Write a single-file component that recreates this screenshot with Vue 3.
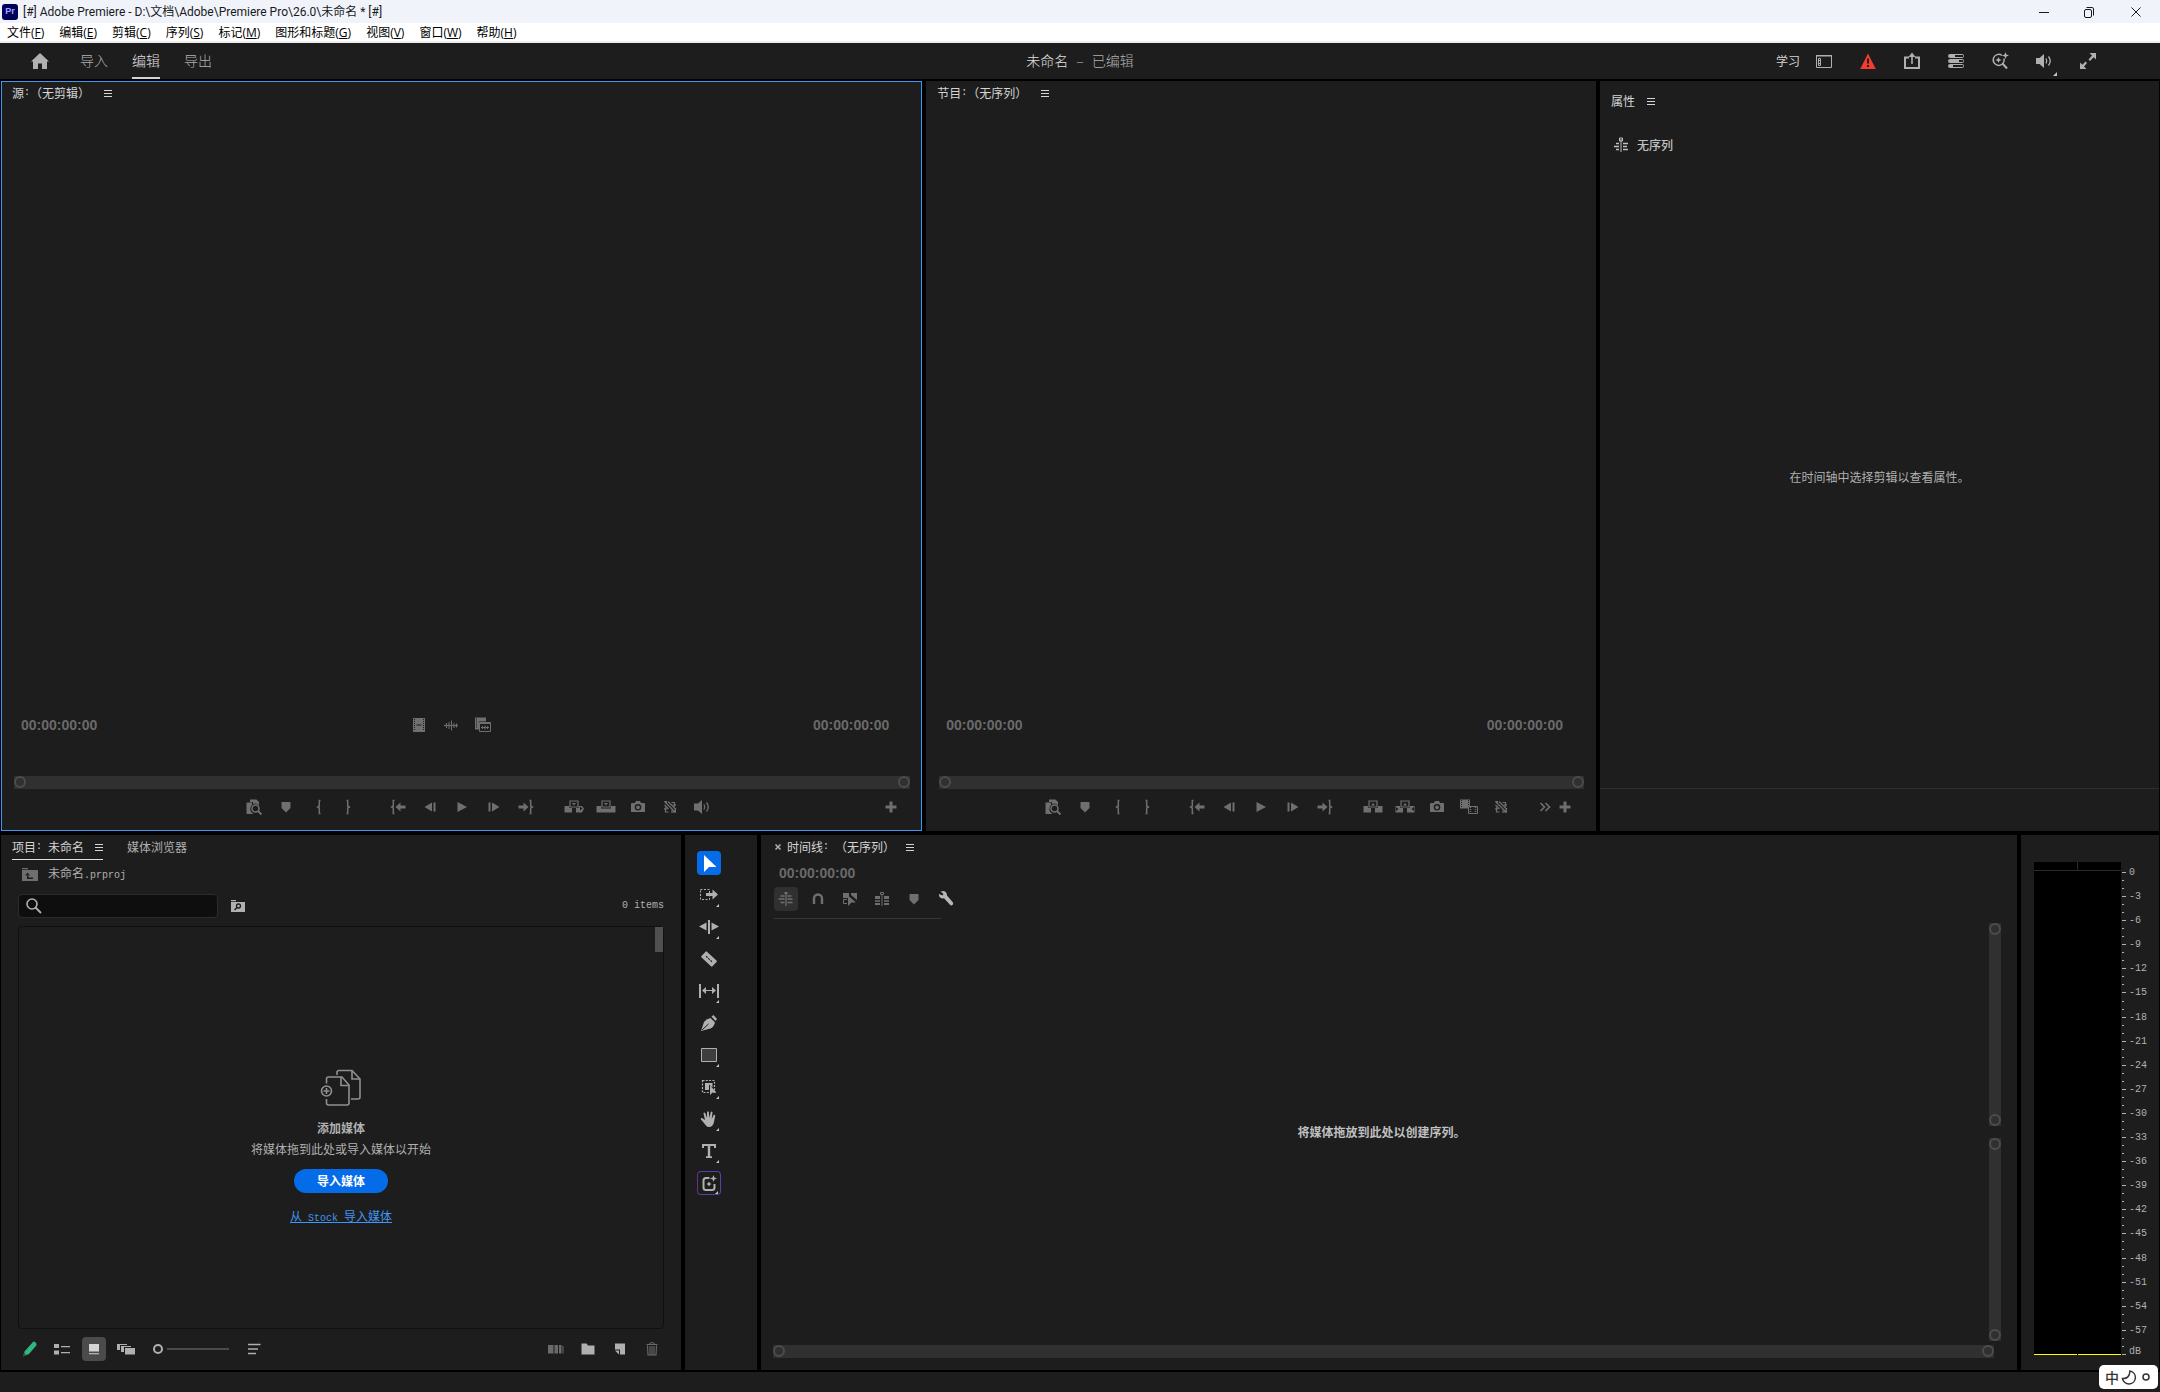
<script setup>
import { ref } from 'vue'

const menus = [
  ['文件', 'F'], ['编辑', 'E'], ['剪辑', 'C'], ['序列', 'S'], ['标记', 'M'],
  ['图形和标题', 'G'], ['视图', 'V'], ['窗口', 'W'], ['帮助', 'H'],
]

const modes = ['导入', '编辑', '导出']
const activeMode = ref('编辑')

const headerTools = [
  ['workspace', '工作区'], ['warning', '警告'], ['share', '快速导出'], ['stack', '项目设置'],
  ['sparkle-search', '搜索'], ['volume', '音频'], ['expand', '全屏'],
]

const transportLeft = [
  ['find', '匹配帧'], ['marker', '添加标记'], ['brace-open', '标记入点'], ['brace-close', '标记出点'],
  ['go-in', '转到入点'], ['step-back', '后退一帧'],
]
const sourceRight = [
  ['step-forward', '前进一帧'], ['go-out', '转到出点'], ['insert', '插入'], ['overwrite', '覆盖'],
  ['camera', '导出帧'], ['proxy', '切换代理'], ['sound', '静音'],
]
const programRight = [
  ['step-forward', '前进一帧'], ['go-out', '转到出点'], ['lift', '提升'], ['extract', '提取'],
  ['camera', '导出帧'], ['compare', '比较视图'], ['proxy', '切换代理'],
]

const tools = [
  ['arrow', '选择工具', false], ['track', '向前选择轨道工具', true], ['ripple', '波纹编辑工具', true],
  ['razor', '剃刀工具', false], ['slip', '外滑工具', true], ['pen', '钢笔工具', false],
  ['rectangle', '矩形工具', true], ['object', '对象蒙版工具', true], ['hand', '手形工具', true],
  ['type', '文字工具', true], ['generate', '生成式扩展工具', true],
]
const activeTool = ref('arrow')

const timelineTools = [
  ['nest', '嵌套序列'], ['magnet', '对齐'], ['linked', '链接选择项'],
  ['tracks', '添加编辑'], ['marker', '添加标记'], ['wrench', '时间轴显示设置'],
]

const levels = Array.from({ length: 20 }, (_, i) => (i === 0 ? '0' : `-${i * 3}`))
const zoom = ref(0)
const query = ref('')
</script>

<template>
  <svg class="sprite" aria-hidden="true">
    <symbol id="menu" viewBox="0 0 24 24"><path d="M8 9h8M8 12h8M8 15h8" stroke="currentColor" fill="none" transform="translate(0 .5)" /></symbol>
    <symbol id="home" viewBox="0 0 24 24"><path d="M12 4 3 12.500h2V20h5v-5.500h4V20h5v-7.500h2z" /></symbol>
    <symbol id="workspace" viewBox="0 0 24 24"><path d="M4.500 6.500h15v12h-15z" fill="none" stroke="currentColor" /><path d="M4 6h16v1.500H4z" /><path d="M6.500 9.500h2v7h-2z" fill="none" stroke="currentColor" /><path d="M6.500 11.500h2M6.500 14.500h2" stroke="currentColor" /></symbol>
    <symbol id="warning" viewBox="0 0 24 24"><path d="M12 4.500 19.800 20H4.200z" fill="#f23d2e" /><path d="M11 9.500h2v5h-2zM11 16h2v2h-2z" fill="#1d1d1d" /></symbol>
    <symbol id="share" viewBox="0 0 24 24"><path d="M9 8.500H5V19h14V8.500h-4" fill="none" stroke="currentColor" stroke-width="2" /><path d="M12 15V6" stroke="currentColor" stroke-width="1.600" /><path d="M12 3.500 8.500 8h7z" /></symbol>
    <symbol id="stack" viewBox="0 0 24 24"><g fill="none" stroke="currentColor"><rect x="4.500" y="5.500" width="15" height="3" rx="1" /><rect x="4.500" y="10.500" width="15" height="3" rx="1" /><rect x="4.500" y="15.500" width="15" height="3" rx="1" /></g><path d="M5 6h6v2H5zM5 11h10v2H5zM5 16h4v2H5z" /></symbol>
    <symbol id="sparkle-search" viewBox="0 0 24 24"><path d="M14 6.500A5.500 5.500 0 1 0 16 9.500" fill="none" stroke="currentColor" stroke-width="1.500" /><path d="m14.500 14.500 4.500 5" stroke="currentColor" stroke-width="2" /><path d="m17.500 3 .9 2.600L21 6.500l-2.600.9-.9 2.600-.9-2.600L14 6.500l2.600-.9zM10.500 8l.9 2.100 2.100.9-2.100.9-.9 2.100-.9-2.100L7.500 11l2.100-.9z" /></symbol>
    <symbol id="volume" viewBox="0 0 24 24"><path d="M4 9h3.500L12 5v14l-4.500-4H4z" /><path d="M14 9.500q1.500 2.500 0 5M16.500 7.500q3.500 4.500 0 9" fill="none" stroke="currentColor" stroke-width="1.300" /></symbol>
    <symbol id="expand" viewBox="0 0 24 24"><path d="M13.500 4H20v6.500L17.700 8.200 14 12l-1.500-1.500L16 6.500zM10.500 20H4v-6.500l2.300 2.300L9.500 12.500 11 14l-3 3.500z" /></symbol>
    <symbol id="sequence" viewBox="0 0 24 24"><path d="M12 6v13" stroke="currentColor" /><path d="M10.500 5h3v3h-3z" fill="none" stroke="currentColor" /><path d="M7 10.500h3M5 13.500h5M7 16.500h3M14 10.500h5M14 13.500h4M14 16.500h5" stroke="currentColor" stroke-width="1.700" /></symbol>

    <symbol id="film" viewBox="0 0 24 24"><path d="M6 5h12v14H6z" /><path d="M7.500 6v12M16.500 6v12" stroke="#1d1d1d" stroke-dasharray="1 1" /><path d="M9.500 12h5" stroke="#1d1d1d" /></symbol>
    <symbol id="wave" viewBox="0 0 24 24"><path d="M5 12.500h14" stroke="currentColor" stroke-width="1.200" /><path d="M7.500 10v5M10 9v7M12.500 7.500v10M15 10v5M17.500 10.500v4" stroke="currentColor" /></symbol>
    <symbol id="film-wave" viewBox="0 0 24 24"><path d="M4 4.500h11v4H8v8H4z" /><path d="M5.500 5.500v10" stroke="#1d1d1d" stroke-dasharray="1 1" /><path d="M8.500 9.500h11v9h-11z" fill="none" stroke="currentColor" /><path d="M9 9h10v2H9z" /><path d="M10 14.500h8M11.500 13v3M14 12.500v4M16.500 13v3" stroke="currentColor" /></symbol>

    <symbol id="find" viewBox="0 0 24 24"><path d="M8 4.500h6.500L17 7v3.500a5 5 0 0 0-6-1.500V7H8zM4.500 7.500H10V10a5.500 5.500 0 0 0 1.500 9h-7z" /><circle cx="13.500" cy="13.500" r="3.500" fill="none" stroke="currentColor" stroke-width="1.600" /><path d="m16 16 3.500 3.500" stroke="currentColor" stroke-width="2" /></symbol>
    <symbol id="marker" viewBox="0 0 24 24"><path d="M8 7h8q.5 0 .5.500V13L12 17.500 7.500 13V7.500Q7.500 7 8 7z" /></symbol>
    <symbol id="brace-open" viewBox="0 0 24 24"><path d="M14.500 5.500h-1.200V11L11.700 12l1.600 1v5.500h1.200" fill="none" stroke="currentColor" stroke-width="1.500" /></symbol>
    <symbol id="brace-close" viewBox="0 0 24 24"><path d="M10.500 5.500h1.200V11l1.600 1-1.600 1v5.500h-1.200" fill="none" stroke="currentColor" stroke-width="1.500" /></symbol>
    <symbol id="go-in" viewBox="0 0 24 24"><path d="M8.500 5.500H7.300V11l-1.600 1 1.600 1v5.500h1.200" fill="none" stroke="currentColor" stroke-width="1.500" /><path d="m9.500 12 5-4.500v3h5v3h-5v3z" /></symbol>
    <symbol id="go-out" viewBox="0 0 24 24"><path d="M15.500 5.500h1.200V11l1.600 1-1.600 1v5.500h-1.200" fill="none" stroke="currentColor" stroke-width="1.500" /><path d="m14.500 12-5-4.500v3h-5v3h5v3z" /></symbol>
    <symbol id="step-back" viewBox="0 0 24 24"><path d="M6.500 12 14 7.500v9zM15.500 7.500h2v9h-2z" /></symbol>
    <symbol id="step-forward" viewBox="0 0 24 24"><path d="M17.500 12 10 7.500v9zM6.500 7.500h2v9h-2z" /></symbol>
    <symbol id="play" viewBox="0 0 24 24"><path d="M7.500 7v10l9.500-5z" /></symbol>
    <symbol id="insert" viewBox="0 0 24 24"><path d="M2.500 11H7v2h3v4.500H2.500zM17 11h3l2 2.500-2 4h-6V13h3z" /><path d="M8 6h8v6H8z" fill="none" stroke="currentColor" stroke-width="1.200" /><path d="M10 8h4l-2 2.500z" /><path d="m18 11.500 2.500 2-2.500 2z" fill="#1d1d1d" /></symbol>
    <symbol id="overwrite" viewBox="0 0 24 24"><path d="M2.500 11H7v2.500h10V11h4.500v6.500h-19z" /><path d="M8 6h8v6H8z" fill="none" stroke="currentColor" stroke-width="1.200" /><path d="M10 8h4l-2 2.500z" /></symbol>
    <symbol id="lift" viewBox="0 0 24 24"><path d="M2.500 11H7v2h3v4.500H2.500zM17 11h4.500v6.500H14V13h3z" /><path d="M8 6h8v6H8z" fill="none" stroke="currentColor" stroke-width="1.200" /><path d="M10 10.500h4L12 8z" /></symbol>
    <symbol id="extract" viewBox="0 0 24 24"><path d="M2.500 11H7v2h3v4.500H2.500zM17 11h4.500v6.500H14V13h3z" /><path d="M8 6h8v6H8z" fill="none" stroke="currentColor" stroke-width="1.200" /><path d="M10 10.500h4L12 8z" /><path d="m3 12 2.500 2L3 16zM21 12l-2.500 2 2.500 2z" fill="#1d1d1d" /></symbol>
    <symbol id="camera" viewBox="0 0 24 24"><path d="M6 8h3l1-2h4l1 2h3q1 0 1 1v8H5V9q0-1 1-1z" /><circle cx="12" cy="12.300" r="2.600" fill="none" stroke="#1d1d1d" stroke-width="1.400" /></symbol>
    <symbol id="proxy" viewBox="0 0 24 24"><g fill="none" stroke="currentColor" stroke-width="1.200"><path d="m6.500 6.500 11 11M6.500 10l4 4M10 6.500l8 8" /><path d="M13.500 7.500h3v3M7.500 14v3h3M14 15v3M16 13.500h2" /></g><path d="m14.500 9.500 4 0-2 2.500zM5.500 14.500h4l-2-2.500z" /><path d="M6 6h3v3z" /><path d="M14 17.500h4v-4z" /></symbol>
    <symbol id="sound" viewBox="0 0 24 24"><path d="M4 8.500h4L12 5v14l-4-3.500H4z" /><path d="M14 9.500q1.500 2.500 0 5M16.500 7.500q3.500 4.500 0 9" fill="none" stroke="currentColor" stroke-width="1.300" /></symbol>
    <symbol id="compare" viewBox="0 0 24 24"><path d="M3 4.500h10v9H3z" /><path d="M4.500 5v8M11.500 5v8" stroke="#1d1d1d" stroke-dasharray="1 1" /><path d="M11.500 11.500h9v7h-9z" fill="#1d1d1d" stroke="currentColor" /><path d="M13.500 12v6M18.500 12v6" stroke="currentColor" stroke-width="1.500" stroke-dasharray="1 1" /></symbol>
    <symbol id="plus" viewBox="0 0 24 24"><path d="M10.500 6.500h3v4h4v3h-4v4h-3v-4h-4v-3h4z" /></symbol>
    <symbol id="chevrons" viewBox="0 0 24 24"><path d="m7.500 8 4 4-4 4M12.500 8l4 4-4 4" fill="none" stroke="currentColor" stroke-width="1.700" /></symbol>

    <symbol id="folder-up" viewBox="0 0 24 24"><path d="M4 6h6v1.200H4zM4 8h16v11H4z" /><path d="M9.500 10.500 7 13.500h5zM9 13h1.500v2.500H15V17H9z" fill="#1d1d1d" /></symbol>
    <symbol id="search" viewBox="0 0 24 24"><circle cx="10" cy="10" r="5" fill="none" stroke="currentColor" stroke-width="1.600" /><path d="m13.500 13.500 5.500 5.500" stroke="currentColor" stroke-width="1.800" /></symbol>
    <symbol id="folder-search" viewBox="0 0 24 24"><path d="M5 6h5v1.200H5zM5 8h14v10H5z" /><circle cx="12.500" cy="12" r="2" fill="none" stroke="#1d1d1d" stroke-width="1.300" /><path d="M11 13.500 8.500 16" stroke="#1d1d1d" stroke-width="1.500" /></symbol>
    <symbol id="media" viewBox="0 0 48 40"><g fill="none" stroke="currentColor" stroke-width="1.600"><path d="M9.500 14.500V10q0-2 2-2H25l7 8v18q0 2-2 2H11.500q-2 0-2-2v-4" /><path d="M24 8v8.500h8" /><path d="M20 6V3.500q0-2 2-2h13l8 8.500v18q0 2-2 2h-7" /><path d="M35 2v8h8" /><circle cx="9.500" cy="22" r="5" /><path d="M9.500 19v6M6.500 22h6" /></g></symbol>
    <symbol id="pencil" viewBox="0 0 24 24"><path d="M14.500 5.500q1-1.500 2.500-.5l1 1q1 1 .3 2.500L11 17l-6 2.500 1.500-5z" fill="#33b57e" /><path d="m6 15.500 2.500 2.500L5 19.500z" fill="#1d1d1d" opacity=".5" /></symbol>
    <symbol id="list" viewBox="0 0 24 24"><path d="M4 7h5v4H4zM4 13.500h5v4H4zM11 9h9v1.200h-9zM11 15h9v1.200h-9z" /></symbol>
    <symbol id="icons" viewBox="0 0 24 24"><path d="M7 7h10v7.500H7zM7 16.200h10v1H7z" /></symbol>
    <symbol id="freeform" viewBox="0 0 24 24"><path d="M3 7h10v1H6v5H3zM7 9h10v1h-7v5H7zM11 11h10v6.500H11z" /></symbol>
    <symbol id="sort" viewBox="0 0 24 24"><path d="M6 7.500h12.500M6 12h10M6 16.500h8" stroke="currentColor" stroke-width="1.700" /></symbol>
    <symbol id="automate" viewBox="0 0 24 24"><path d="M4 8h5.500v8.500H4zM10.500 8H14v8.500h-3.500zM15 8h2.500v8.500H15zM18.500 9h1v7.500h-1z" /></symbol>
    <symbol id="folder" viewBox="0 0 24 24"><path d="M5.500 6.500h5l1.500 2h6.500v9h-13z" /></symbol>
    <symbol id="new-item" viewBox="0 0 24 24"><path d="M7 6.500h10v11h-5v-5H7z" /><path d="M7 13.500h4v4z" /></symbol>
    <symbol id="trash" viewBox="0 0 24 24"><path d="M6.500 7.500h11M9.500 7q2.500-3 5 0M7.500 8.500l.5 9.500h8l.5-9.500M10 9v8.500M12 9v8.500M14 9v8.500" fill="none" stroke="currentColor" stroke-width="1.100" /></symbol>

    <symbol id="arrow" viewBox="0 0 24 24"><path d="M7 4v17l5-5h7.500z" /></symbol>
    <symbol id="track" viewBox="0 0 24 24"><path d="M3.500 6.500h9v10h-9z" fill="none" stroke="currentColor" stroke-dasharray="2 1.500" /><path d="M9 10h6.500V6.500l5.500 5-5.500 5V13H9z" /></symbol>
    <symbol id="ripple" viewBox="0 0 24 24"><path d="M11 5h2v14h-2zM9.500 7.500v8L2 11.500zM14.500 7.500v8l7.500-4z" /></symbol>
    <symbol id="razor" viewBox="0 0 24 24"><g transform="rotate(43 12 12)"><rect x="4.500" y="8" width="15" height="8" rx="1" /><path d="M8 12h8" stroke="#1d1d1d" stroke-width="1.200" stroke-dasharray="2 1" /></g></symbol>
    <symbol id="slip" viewBox="0 0 24 24"><path d="M2 5h2v14H2zM20 5h2v14h-2zM5 11.500l4-3.500v3h6V8l4 3.500-4 3.500v-3H9v3z" /></symbol>
    <symbol id="pen" viewBox="0 0 24 24"><path d="m4 20 3-9q2-3 6.500-4L18 11.500q-1.500 5-4.500 6z" /><path d="m14.500 5.500 2-1.500 3.500 4-1.500 2z" /><path d="m5 19 6.500-6" stroke="#1d1d1d" /></symbol>
    <symbol id="rectangle" viewBox="0 0 24 24"><path d="M4.500 5.500h15v13h-15z" fill="#3e3e3e" stroke="currentColor" /></symbol>
    <symbol id="object" viewBox="0 0 24 24"><path d="M5.500 5.500h12v12h-12z" fill="none" stroke="currentColor" stroke-width="1.200" stroke-dasharray="2 1.300" /><path d="M8 8h7.500v4.500L12 9.500V15H8z" /><path d="M13 10.500v9.500l2.500-2.500h4z" /></symbol>
    <symbol id="hand" viewBox="0 0 24 24"><path d="m9 18.500-5-6q-1-2 1-1.500l3 2-1.500-6.500q.5-2 1.800-.2l1.700 4.700V5q.9-1.500 1.800 0l.5 6 1.500-6q1.300-1.200 1.700.5l-.8 6.500 2-4q1.400-1 1.500.7L17 15q-1 5-5 5-2 0-3-1.500z" /></symbol>
    <symbol id="type" viewBox="0 0 24 24"><path d="M5 5h14v4h-2V7h-3.800v10.300H15V19H9v-1.700h1.800V7H7v2H5z" /></symbol>
    <symbol id="generate" viewBox="0 0 24 24"><path d="M12.500 7H9q-2.500 0-2.500 2.500v7Q6.500 19 9 19h6q2.500 0 2.500-2.500V13" fill="none" stroke="currentColor" stroke-width="2" /><path d="m16.500 4 .9 2.600 2.600.9-2.600.9-.9 2.600-.9-2.600-2.600-.9 2.600-.9zM12 10.500l.9 1.600 1.600.9-1.600.9-.9 1.600-.9-1.600-1.600-.9 1.600-.9z" /></symbol>
    <symbol id="corner" viewBox="0 0 4 4"><path d="M4 0v4H0z" /></symbol>

    <symbol id="nest" viewBox="0 0 24 24"><path d="M12 5v14" stroke="currentColor" stroke-width="1.300" /><path d="M10.500 5h3v2h-3z" /><path d="M6.500 9h4M4.500 12h6M6.500 15.500h4M13.500 9h4M13.500 12h5M13.500 15.500h5" stroke="currentColor" stroke-width="1.500" /></symbol>
    <symbol id="magnet" viewBox="0 0 24 24"><path d="M8 17v-5.500a4 4 0 0 1 8 0V17" fill="none" stroke="currentColor" stroke-width="2.400" /></symbol>
    <symbol id="linked" viewBox="0 0 24 24"><path d="M5 6h6v5H5zM13 6h6v7l-6-5z" /><path d="M9 12.500H5.500v4H9" fill="none" stroke="currentColor" /><path d="M10 8.500V19l3.500-3.500H18z" /></symbol>
    <symbol id="tracks" viewBox="0 0 24 24"><path d="M5 9h5v3H5zM14 9h5v3h-5zM5 13.200h5v1.600H5zM14 13.200h5v1.600h-5zM5 16h5v2H5zM14 16h5v2h-5z" /><path d="M12 7v12" stroke="currentColor" /><path d="M10.500 5.500h3v2h-3z" fill="none" stroke="currentColor" /></symbol>
    <symbol id="wrench" viewBox="0 0 24 24"><path d="M6.500 4.500 10 4q3 1 3 4.500l6 7q.8 2-1 2.800-1.200.4-2-.5l-6-6.500Q6 12 5 8.500V7l3.500 1.500L9.500 7z" /></symbol>
  </svg>

  <div class="app">
    <header class="titlebar">
      <span class="logo">Pr</span>
      <h1 class="title">[#] Adobe Premiere - D:\文档\Adobe\Premiere Pro\26.0\未命名 * [#]</h1>
      <div class="window-buttons">
        <button type="button" aria-label="最小化"><svg viewBox="0 0 12 12"><path d="M1 6.500h10" /></svg></button>
        <button type="button" aria-label="还原"><svg viewBox="0 0 12 12"><rect x="1.500" y="3.500" width="7" height="8" rx="1.500" /><path d="M3.500 1.500H9q1.500 0 1.500 1.500v6.500" /></svg></button>
        <button type="button" aria-label="关闭"><svg viewBox="0 0 12 12"><path d="m1.500 1.500 9 9M10.500 1.500l-9 9" /></svg></button>
      </div>
    </header>

    <nav class="menubar">
      <button v-for="[name, key] in menus" :key="key" type="button">{{ name }}(<u>{{ key }}</u>)</button>
    </nav>

    <div class="header">
      <nav class="modes">
        <button type="button" class="home" aria-label="主页"><svg class="icon"><use href="#home" /></svg></button>
        <button v-for="mode in modes" :key="mode" type="button" class="mode" :class="{ active: mode === activeMode }" @click="activeMode = mode">{{ mode }}</button>
      </nav>
      <p class="project-name"><strong>未命名</strong><span>–</span><span>已编辑</span></p>
      <div class="header-tools">
        <a href="#">学习</a>
        <button v-for="[icon, label] in headerTools" :key="icon" type="button" :aria-label="label">
          <svg class="icon"><use :href="'#' + icon" /></svg>
          <svg v-if="icon === 'volume'" class="corner"><use href="#corner" /></svg>
        </button>
      </div>
    </div>

    <main class="workspace">
      <div class="row">
        <section class="panel monitor source">
          <div class="tabs"><button type="button">源<span class="latin">:</span>（无剪辑）</button><button type="button" aria-label="面板菜单"><svg class="icon"><use href="#menu" /></svg></button></div>
          <div class="screen"></div>
          <div class="time">
            <span class="timecode">00:00:00:00</span>
            <div class="drag">
              <button type="button" aria-label="仅拖动视频"><svg class="icon"><use href="#film" /></svg></button>
              <button type="button" aria-label="仅拖动音频"><svg class="icon"><use href="#wave" /></svg></button>
              <button type="button" aria-label="视频和音频"><svg class="icon"><use href="#film-wave" /></svg></button>
            </div>
            <span class="timecode">00:00:00:00</span>
          </div>
          <div class="zoombar"><i></i><i></i></div>
          <div class="transport">
            <div class="side before">
              <button v-for="[icon, label] in transportLeft" :key="icon" type="button" :class="icon" :aria-label="label"><svg class="icon"><use :href="'#' + icon" /></svg></button>
            </div>
            <button type="button" aria-label="播放"><svg class="icon"><use href="#play" /></svg></button>
            <div class="side">
              <button v-for="[icon, label] in sourceRight" :key="icon" type="button" :class="icon" :aria-label="label"><svg class="icon"><use :href="'#' + icon" /></svg></button>
              <div class="extras"><button type="button" aria-label="按钮编辑器"><svg class="icon"><use href="#plus" /></svg></button></div>
            </div>
          </div>
        </section>

        <section class="panel monitor program">
          <div class="tabs"><button type="button">节目<span class="latin">:</span>（无序列）</button><button type="button" aria-label="面板菜单"><svg class="icon"><use href="#menu" /></svg></button></div>
          <div class="screen"></div>
          <div class="time">
            <span class="timecode">00:00:00:00</span>
            <span class="timecode">00:00:00:00</span>
          </div>
          <div class="zoombar"><i></i><i></i></div>
          <div class="transport">
            <div class="side before">
              <button v-for="[icon, label] in transportLeft" :key="icon" type="button" :class="icon" :aria-label="label"><svg class="icon"><use :href="'#' + icon" /></svg></button>
            </div>
            <button type="button" aria-label="播放"><svg class="icon"><use href="#play" /></svg></button>
            <div class="side">
              <button v-for="[icon, label] in programRight" :key="icon" type="button" :class="icon" :aria-label="label"><svg class="icon"><use :href="'#' + icon" /></svg></button>
              <div class="extras">
                <button type="button" aria-label="更多按钮"><svg class="icon"><use href="#chevrons" /></svg></button>
                <button type="button" aria-label="按钮编辑器"><svg class="icon"><use href="#plus" /></svg></button>
              </div>
            </div>
          </div>
        </section>

        <section class="panel properties">
          <div class="tabs"><button type="button">属性</button><button type="button" aria-label="面板菜单"><svg class="icon"><use href="#menu" /></svg></button></div>
          <h2><svg class="icon"><use href="#sequence" /></svg>无序列</h2>
          <p>在时间轴中选择剪辑以查看属性。</p>
          <footer></footer>
        </section>
      </div>

      <div class="row">
        <section class="panel project">
          <div class="tabs">
            <div class="tab-active"><button type="button">项目<span class="latin">: </span>未命名</button><button type="button" aria-label="面板菜单"><svg class="icon"><use href="#menu" /></svg></button></div>
            <button type="button" class="tab-idle">媒体浏览器</button>
          </div>
          <div class="crumb"><svg class="icon"><use href="#folder-up" /></svg><span>未命名<span class="latin">.prproj</span></span></div>
          <div class="filter">
            <label class="search"><svg class="icon"><use href="#search" /></svg><input v-model="query" type="search" aria-label="搜索项目" /></label>
            <button type="button" aria-label="新建搜索素材箱"><svg class="icon"><use href="#folder-search" /></svg></button>
            <span class="latin count">0 items</span>
          </div>
          <div class="bin">
            <svg class="media"><use href="#media" /></svg>
            <strong>添加媒体</strong>
            <p>将媒体拖到此处或导入媒体以开始</p>
            <button type="button" class="primary">导入媒体</button>
            <a href="#">从<span class="latin"> Stock </span>导入媒体</a>
            <span class="thumb"></span>
          </div>
          <div class="binbar">
            <button type="button" aria-label="可写"><svg class="icon"><use href="#pencil" /></svg></button>
            <button type="button" aria-label="列表视图"><svg class="icon"><use href="#list" /></svg></button>
            <button type="button" class="on" aria-label="图标视图"><svg class="icon"><use href="#icons" /></svg></button>
            <button type="button" aria-label="自由变换视图"><svg class="icon"><use href="#freeform" /></svg></button>
            <input v-model="zoom" type="range" min="0" max="100" aria-label="缩放" />
            <button type="button" aria-label="排序图标"><svg class="icon"><use href="#sort" /></svg></button>
            <div class="binbar-end">
              <button type="button" class="dim" aria-label="自动匹配序列"><svg class="icon"><use href="#automate" /></svg></button>
              <button type="button" aria-label="新建素材箱"><svg class="icon"><use href="#folder" /></svg></button>
              <button type="button" aria-label="新建项"><svg class="icon"><use href="#new-item" /></svg></button>
              <button type="button" class="dim" aria-label="清除"><svg class="icon"><use href="#trash" /></svg></button>
            </div>
          </div>
        </section>

        <section class="panel tools">
          <button v-for="[icon, label, more] in tools" :key="icon" type="button" :class="[icon, { active: icon === activeTool }]" :aria-label="label" @click="activeTool = icon">
            <svg class="icon"><use :href="'#' + icon" /></svg>
            <svg v-if="more" class="corner"><use href="#corner" /></svg>
          </button>
        </section>

        <section class="panel timeline">
          <div class="tabs"><button type="button" class="close" aria-label="关闭"><svg viewBox="0 0 8 8"><path d="m1.500 1.500 5 5M6.500 1.500l-5 5" /></svg></button><button type="button">时间线<span class="latin">: </span>（无序列）</button><button type="button" aria-label="面板菜单"><svg class="icon"><use href="#menu" /></svg></button></div>
          <span class="timecode">00:00:00:00</span>
          <div class="timeline-tools">
            <button v-for="[icon, label] in timelineTools" :key="icon" type="button" :class="icon" :aria-label="label"><svg class="icon"><use :href="'#' + icon" /></svg></button>
          </div>
          <div class="tracks-area">
            <p>将媒体拖放到此处以创建序列。</p>
            <div class="vbars"><div class="vbar"><i></i><i></i></div><div class="vbar"><i></i><i></i></div></div>
          </div>
          <div class="zoombar"><i></i><i></i></div>
        </section>

        <section class="panel meters">
          <div class="meter"><div class="channel"></div><div class="channel"></div></div>
          <div class="ticks"><i v-for="n in 61" :key="n" :class="{ major: n % 3 === 1 }"></i></div>
          <div class="levels latin"><span v-for="level in levels" :key="level">{{ level }}</span><span class="unit">dB</span></div>
        </section>
      </div>
    </main>

    <footer class="status"></footer>

    <div class="ime"><span>中</span><svg viewBox="0 0 16 16"><path d="M9 2a6.500 6.500 0 1 1-7.500 7.500Q8.500 10 9 2z" /></svg><svg viewBox="0 0 16 16"><circle cx="8" cy="8" r="3" /></svg></div>
  </div>
</template>

<style>
body {
  margin: 0;
  background: #000;
}
</style>

<style scoped>
.sprite {
  position: absolute;
  width: 0;
  height: 0;
}

.app {
  position: relative;
  display: flex;
  flex-direction: column;
  min-height: 100vh;
  background: #000;
  color: #b0b0b0;
  font: 12px/16px "Noto Sans CJK SC", sans-serif;
}

.app * {
  box-sizing: border-box;
}

button {
  display: flex;
  align-items: center;
  justify-content: center;
  padding: 0;
  border: 0;
  background: none;
  color: inherit;
  font: inherit;
}

h1,
h2,
p {
  margin: 0;
  font: inherit;
}

.icon {
  flex: none;
  width: 24px;
  height: 24px;
  fill: currentColor;
}

.corner {
  position: absolute;
  right: 2px;
  bottom: 0;
  width: 3px;
  height: 3px;
  fill: #c4c4c4;
}

.latin {
  font-family: "Liberation Mono", monospace;
  font-size: 10px;
  white-space: pre;
}

.titlebar {
  display: flex;
  align-items: center;
  height: 23px;
  padding-left: 2px;
  background: #f0f3fa;
  color: #1a1a1a;
}

.logo {
  width: 16px;
  height: 16px;
  border-radius: 3px;
  background: #00005b;
  color: #a5a5ff;
  font: bold 9px/15px "Liberation Sans", sans-serif;
  text-align: center;
}

.title {
  margin-left: 5px;
  font: 12px/16px Roboto, "Noto Sans CJK SC", sans-serif;
}

.window-buttons {
  display: flex;
  margin-left: auto;
}

.window-buttons button {
  width: 45px;
  height: 21px;
}

.window-buttons button:last-child {
  width: 49px;
}

.window-buttons svg {
  width: 12px;
  height: 12px;
  fill: none;
  stroke: #1a1a1a;
}

.menubar {
  display: flex;
  gap: 15px;
  height: 20px;
  padding: 2px 0 0 7px;
  border-bottom: 2px solid #eee;
  background: #fff;
  color: #000;
  font-family: "Open Sans", "Noto Sans CJK SC", sans-serif;
}

.header {
  display: grid;
  grid-template-columns: 1fr auto 1fr;
  align-items: center;
  height: 36px;
  background: #1d1d1d;
}

.modes {
  display: flex;
  align-self: stretch;
  gap: 24px;
  padding-left: 28px;
}

.mode {
  width: 28px;
  border-bottom: 2px solid transparent;
  font-size: 14px;
  font-weight: 300;
}

.home {
  width: 24px;
}

.home + .mode {
  margin-left: 4px;
}

.mode.active {
  border-bottom-color: #d4d4d4;
  color: #e0e0e0;
}

.project-name {
  display: flex;
  gap: 8px;
  padding-bottom: 2px;
  font-size: 14px;
  font-weight: 300;
}

.project-name strong {
  color: #e0e0e0;
  font-weight: 300;
}

.header-tools {
  display: flex;
  align-items: center;
  justify-content: flex-end;
  gap: 20px;
  padding-right: 60px;
}

.header-tools a {
  margin-right: -8px;
  color: #d4d4d4;
  text-decoration: none;
}

.header-tools button {
  position: relative;
}

.header-tools .corner {
  right: -1px;
  bottom: -3px;
  width: 4px;
  height: 4px;
}

.workspace {
  flex: 1;
  display: grid;
  grid-template-rows: 750fr 535fr;
  gap: 4px;
  padding: 2px 1px;
}

.row {
  display: flex;
  gap: 4px;
  min-height: 0;
}

.panel {
  display: flex;
  flex-direction: column;
  min-width: 0;
  background: #1d1d1d;
}

.tabs {
  display: flex;
  align-items: center;
  gap: 6px;
  height: 24px;
  padding-left: 11px;
  color: #d4d4d4;
}

.monitor .tabs {
  height: 22px;
  padding-left: 10px;
}

.source {
  flex: 921 1 0;
  border: 1px solid #4096f3;
}

.program {
  flex: 669 1 0;
  border: 1px solid transparent;
}

.properties {
  flex: 560 1 0;
}

.screen {
  flex: 1;
}

.time {
  display: flex;
  align-items: center;
  justify-content: space-between;
  height: 24px;
  padding: 0 32px 0 19px;
}

.timecode {
  color: #6a6a6a;
  font: 700 14px/20px "Liberation Sans", sans-serif;
}

.drag {
  display: flex;
  gap: 8px;
  padding-right: 8px;
  color: #6f6f6f;
}

.zoombar,
.vbar {
  display: flex;
  justify-content: space-between;
  background: #303030;
}

.zoombar {
  height: 13px;
  margin: 39px 11px 0 12px;
}

.zoombar i,
.vbar i {
  width: 12px;
  height: 12px;
  border: 2px solid #4c4c4c;
  border-radius: 50%;
}

.transport {
  display: grid;
  grid-template-columns: 1fr 32px 1fr;
  margin: 6px 0 11px;
  color: #6f6f6f;
}

.side {
  display: flex;
}

.before {
  justify-content: flex-end;
}

.side > button {
  width: 32px;
}

.side > .brace-close {
  width: 28px;
  margin-right: 20px;
}

.side > .go-out {
  margin-right: 16px;
}

.extras {
  display: flex;
  margin-left: auto;
  padding-right: 18px;
}

.extras button + button {
  margin-left: -4px;
}

.properties .tabs {
  gap: 4px;
  height: 40px;
}

.properties h2 {
  display: flex;
  align-items: center;
  gap: 4px;
  padding: 12px 0 0 9px;
  color: #c0c0c0;
  font-weight: 500;
}

.properties p {
  flex: 1;
  display: flex;
  align-items: center;
  justify-content: center;
  margin-bottom: -8px;
}

.properties footer {
  height: 43px;
  border-top: 1px solid #2e2e2e;
}

.project {
  flex: 0 1 680px;
}

.tab-active {
  display: flex;
  justify-content: space-between;
  width: 91px;
  border-bottom: 1px solid #e0e0e0;
  overflow: hidden;
}

.tab-active button {
  flex: none;
}

.tab-active .icon {
  margin-right: -8px;
}

.project .tabs {
  gap: 24px;
}

.tab-idle {
  color: #b0b0b0;
}

.crumb {
  display: flex;
  align-items: center;
  gap: 6px;
  padding: 3px 17px 1px;
}

.crumb .icon {
  color: #6f6f6f;
}

.filter {
  display: flex;
  align-items: center;
  gap: 8px;
  padding: 7px 17px 8px;
}

.search {
  display: flex;
  align-items: center;
  width: 200px;
  height: 24px;
  padding-left: 3px;
  border: 1px solid #2c2c2c;
  border-radius: 4px;
  background: #0e0e0e;
}

.search input {
  flex: 1;
  min-width: 0;
  border: 0;
  outline: 0;
  background: none;
  color: #d4d4d4;
  font: inherit;
}

.count {
  margin-left: auto;
}

.bin {
  position: relative;
  flex: 1;
  display: flex;
  flex-direction: column;
  align-items: center;
  justify-content: center;
  margin: 0 17px;
  padding-top: 34px;
  border: 1px solid #101010;
  border-radius: 4px;
}

.media {
  width: 48px;
  height: 40px;
  margin: 6px 0 11px;
  color: #909090;
}

.bin strong {
  font-weight: 700;
}

.bin p {
  margin: 5px 0 12px;
}

.primary {
  width: 94px;
  height: 24px;
  border-radius: 12px;
  background: #056ce9;
  color: #fff;
  font-weight: 700;
}

.bin a {
  margin-top: 15px;
  color: #4096f3;
  text-decoration: underline;
}

.thumb {
  position: absolute;
  top: 0;
  right: 0;
  width: 8px;
  height: 25px;
  background: #505050;
}

.binbar {
  display: flex;
  align-items: center;
  gap: 8px;
  padding: 8px 17px 9px;
}

.binbar .on {
  border-radius: 4px;
  background: #4b4b4b;
  color: #d4d4d4;
}

.binbar .dim {
  color: #6a6a6a;
}

.binbar input {
  width: 76px;
  height: 16px;
  margin: 0 5px 0 7px;
  appearance: none;
  background: linear-gradient(#4b4b4b, #4b4b4b) 14px 7px / 62px 2px no-repeat;
}

.binbar input::-webkit-slider-thumb {
  width: 10px;
  height: 10px;
  appearance: none;
  border: 2px solid #b0b0b0;
  border-radius: 50%;
  background: #1d1d1d;
}

.binbar-end {
  display: flex;
  gap: 8px;
  margin-left: auto;
}

.tools {
  flex: 0 0 72px;
  gap: 8px;
  padding: 16px 12px;
}

.tools button {
  position: relative;
  width: 24px;
  height: 24px;
}

.tools .active {
  border-radius: 4px;
  background: #056ce9;
  color: #fff;
}

.tools .generate {
  border: 1px solid #583fa8;
  border-left-color: #6a2f86;
  border-radius: 4px;
}

.timeline {
  flex: 1;
}

.timeline .tabs {
  gap: 3px;
}

.timeline .close {
  width: 12px;
  color: #b0b0b0;
}

.close svg {
  width: 8px;
  height: 8px;
  fill: none;
  stroke: currentColor;
  stroke-width: 1.500px;
}

.timeline > .timecode {
  margin: 4px 0 4px 18px;
}

.timeline-tools {
  display: flex;
  align-self: flex-start;
  gap: 8px;
  width: 167px;
  height: 32px;
  margin-left: 13px;
  border-bottom: 1px solid #363636;
  color: #6f6f6f;
}

.timeline-tools button {
  flex: none;
  height: 24px;
}

.nest {
  border-radius: 4px;
  background: #303030;
}

.wrench {
  color: #b8b8b8;
}

.tracks-area {
  flex: 1;
  display: flex;
  margin: 4px 16px 4px 13px;
}

.tracks-area p {
  flex: 1;
  display: flex;
  align-items: center;
  justify-content: center;
  color: #c0c0c0;
  font-weight: 700;
}

.vbars {
  display: flex;
  flex-direction: column;
  gap: 12px;
}

.vbar {
  flex: 1;
  flex-direction: column;
}

.timeline .zoombar {
  margin: 0 23px 12px 12px;
}

.meters {
  flex: 0 0 138px;
  flex-direction: row;
  padding: 27px 0 15px 13px;
}

.meter {
  display: flex;
  gap: 1px;
  width: 87px;
  background: linear-gradient(#2a2a2a 9px, #000 9px);
}

.channel {
  flex: 1;
  border-bottom: 1px solid #ff0;
  background: linear-gradient(#2a2a2a, #2a2a2a) 0 8px / 100% 1px no-repeat #000;
}

.ticks {
  display: flex;
  flex-direction: column;
  justify-content: space-between;
  width: 8px;
  padding: 10px 0 0 1px;
}

.ticks i {
  width: 2px;
  height: 1px;
  background: #b0b0b0;
}

.ticks .major {
  width: 4px;
}

.levels {
  display: flex;
  flex-direction: column;
  justify-content: space-between;
  margin: 5px 0 -3px;
  line-height: 12px;
}

.levels .unit {
  margin-top: -3px;
}

.status {
  height: 20px;
  background: #1d1d1d;
}

.ime {
  position: absolute;
  right: 2px;
  bottom: 3px;
  display: flex;
  align-items: center;
  justify-content: space-between;
  width: 59px;
  height: 24px;
  padding: 0 4px 0 6px;
  border-radius: 5px;
  background: #fff;
  color: #333;
  font-size: 14px;
  font-weight: 500;
}

.ime svg {
  flex: none;
  width: 16px;
  height: 16px;
  fill: none;
  stroke: #333;
  stroke-width: 1.500px;
}
</style>
